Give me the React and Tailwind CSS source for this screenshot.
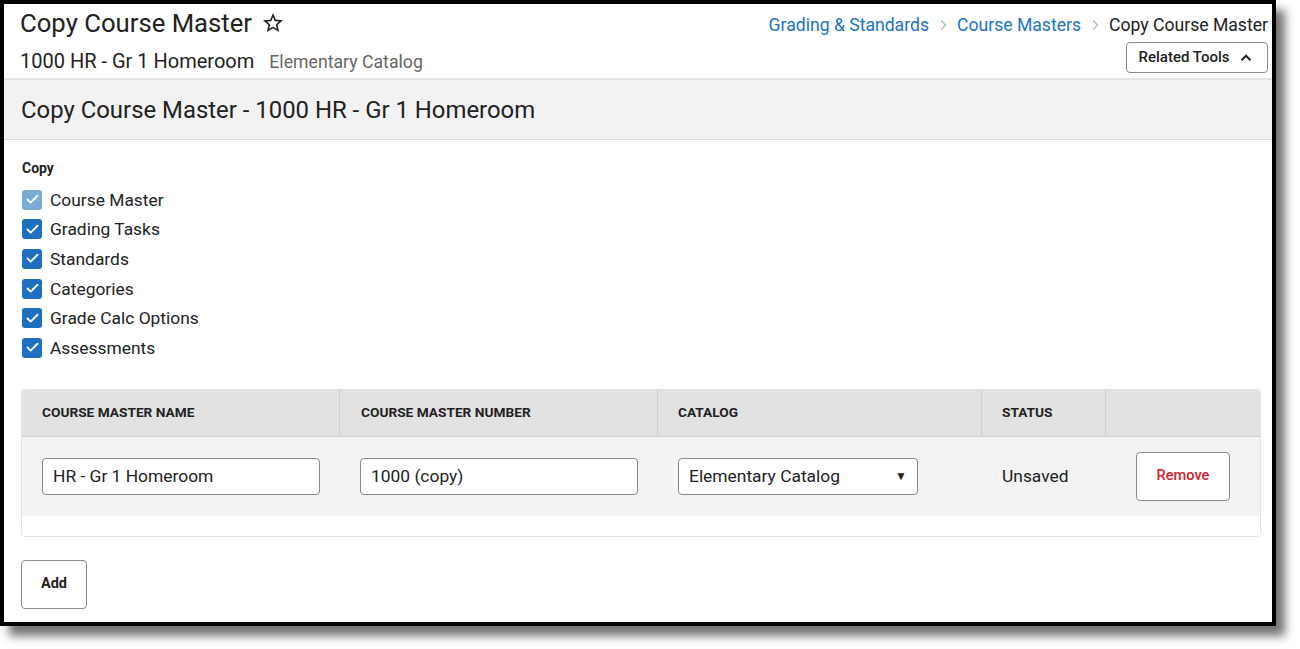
import { Check } from 'lucide-react'

const font = { fontFamily: 'Roboto, "Liberation Sans", sans-serif' }

function StarOutline() {
  return (
    <svg viewBox="0 0 24 24" className="w-[24px] h-[24px] text-[#222]" fill="currentColor">
      <path d="M22 9.24l-7.19-.62L12 2 9.19 8.63 2 9.24l5.46 4.73L5.82 21 12 17.27 18.18 21l-1.63-7.03L22 9.24zM12 15.4l-3.76 2.27 1-4.28-3.32-2.88 4.38-.38L12 6.1l1.71 4.04 4.38.38-3.32 2.88 1 4.28L12 15.4z" />
    </svg>
  )
}

function Chevron() {
  return (
    <svg viewBox="0 0 24 24" className="w-[18px] h-[18px] mx-[5px] text-[#b5b5b5]" fill="none" stroke="currentColor" strokeWidth="1.6">
      <path d="M9.5 6l6 6-6 6" />
    </svg>
  )
}

function CheckRow({ label, disabled }) {
  return (
    <div className="flex items-center h-[29.6px]">
      <span className={`w-[20px] h-[20px] rounded-[3px] flex items-center justify-center ${disabled ? 'bg-[#7aabd8]' : 'bg-[#1d6fbf]'}`}>
        <Check className="w-[15px] h-[15px] text-white" strokeWidth={3} />
      </span>
      <span className="ml-[8px] text-[17.4px] text-[#222]">{label}</span>
    </div>
  )
}

export default function App() {
  const checks = ['Course Master', 'Grading Tasks', 'Standards', 'Categories', 'Grade Calc Options', 'Assessments']
  return (
    <div className="w-[1300px] h-[649px] bg-white overflow-hidden" style={font}>
      <div className="w-[1276px] h-[626px] border-4 border-black bg-white shadow-[9px_10px_9px_rgba(0,0,0,0.55)] flex flex-col">
        {/* header */}
        <div className="flex justify-between h-[76px] border-b-2 border-[#e4e4e4] pl-[16px] pr-[4px]">
          <div className="flex flex-col">
            <div className="flex items-center h-[40px]">
              <h1 className="text-[25.7px] text-[#222] leading-none">Copy Course Master</h1>
              <span className="ml-[9px] -mt-[2px]"><StarOutline /></span>
            </div>
            <div className="flex items-baseline mt-[2px]">
              <span className="text-[20px] text-[#222]">1000 HR - Gr 1 Homeroom</span>
              <span className="ml-[15px] text-[17.7px] text-[#666]">Elementary Catalog</span>
            </div>
          </div>
          <div className="flex flex-col items-end">
            <div className="flex items-center h-[42px] text-[17.6px]">
              <span className="text-[#1a73c5]">Grading &amp; Standards</span>
              <Chevron />
              <span className="text-[#1a73c5]">Course Masters</span>
              <Chevron />
              <span className="text-[#222]">Copy Course Master</span>
            </div>
            <button className="-mt-[4px] h-[31px] w-[142px] border border-[#8c8c8c] rounded-[4px] flex items-center justify-center gap-[8px] text-[15px] font-medium text-[#222]">
              Related Tools
              <svg viewBox="0 0 24 24" className="w-[18px] h-[18px]" fill="none" stroke="currentColor" strokeWidth="2.6">
                <path d="M6 15l6-6 6 6" />
              </svg>
            </button>
          </div>
        </div>

        {/* section title */}
        <div className="h-[60px] bg-[#f2f2f2] border-b border-[#dcdcdc] flex items-center pl-[17px]">
          <h2 className="text-[23.9px] text-[#222] mt-[2px]">Copy Course Master - 1000 HR - Gr 1 Homeroom</h2>
        </div>

        <div className="pl-[18px] pr-[11px] pt-[18px]">
          <div className="text-[14px] font-bold text-[#222] mb-[6px]">Copy</div>
          <div className="flex flex-col">
            {checks.map((c, i) => (
              <CheckRow key={c} label={c} disabled={i === 0} />
            ))}
          </div>

          {/* table */}
          <div className="mt-[26px] ml-[-1px] border border-[#e2e2e2] rounded-[4px] overflow-hidden">
            <div className="grid grid-cols-[318px_318px_324px_124px_1fr] h-[47px] bg-[#e2e2e2] border-b border-[#cfcfcf] text-[13.7px] font-bold text-[#222] uppercase">
              <div className="flex items-center pl-[20px] border-r border-[#cfcfcf]">Course Master Name</div>
              <div className="flex items-center pl-[21px] border-r border-[#cfcfcf]">Course Master Number</div>
              <div className="flex items-center pl-[20px] border-r border-[#cfcfcf]">Catalog</div>
              <div className="flex items-center pl-[20px] border-r border-[#cfcfcf]">Status</div>
              <div />
            </div>
            <div className="grid grid-cols-[318px_318px_324px_124px_1fr] h-[79px] bg-[#f3f3f3] text-[17.4px] text-[#222]">
              <div className="flex items-center pl-[20px]">
                <div className="w-[278px] h-[37px] bg-white border border-[#8a8a8a] rounded-[4px] flex items-center pl-[10px]">HR - Gr 1 Homeroom</div>
              </div>
              <div className="flex items-center pl-[20px]">
                <div className="w-[278px] h-[37px] bg-white border border-[#8a8a8a] rounded-[4px] flex items-center pl-[10px]">1000 (copy)</div>
              </div>
              <div className="flex items-center pl-[20px]">
                <div className="w-[240px] h-[37px] bg-white border border-[#8a8a8a] rounded-[4px] flex items-center justify-between pl-[10px] pr-[10px]">
                  <span>Elementary Catalog</span>
                  <span className="text-[12px]">▼</span>
                </div>
              </div>
              <div className="flex items-center pl-[20px]">Unsaved</div>
              <div className="flex items-center pl-[30px]">
                <button className="w-[94px] h-[49px] bg-white border border-[#8a8a8a] rounded-[4px] text-[14.6px] font-medium text-[#d3202f]">Remove</button>
              </div>
            </div>
            <div className="h-[20px] bg-white" />
          </div>

          <button className="mt-[23px] ml-[-1px] w-[66px] h-[49px] border border-[#8a8a8a] rounded-[4px] text-[14.5px] font-bold text-[#222]">Add</button>
        </div>
      </div>
    </div>
  )
}
